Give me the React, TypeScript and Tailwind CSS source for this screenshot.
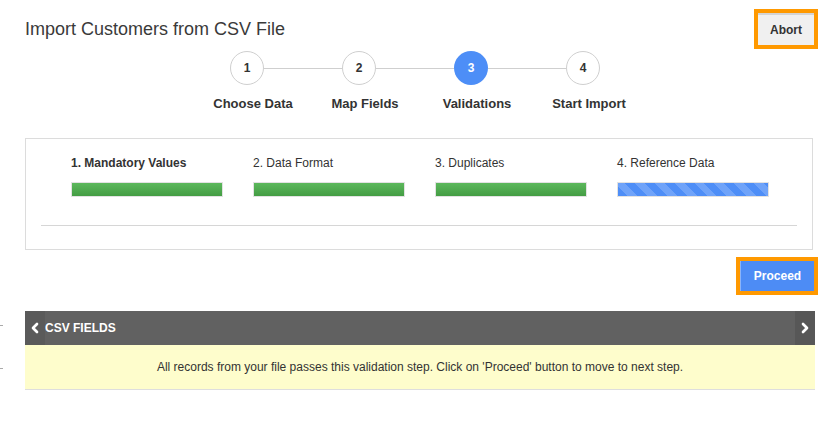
import { ChevronLeft, ChevronRight } from "lucide-react";

const steps = [
  { n: 1, label: "Choose Data" },
  { n: 2, label: "Map Fields" },
  { n: 3, label: "Validations", active: true },
  { n: 4, label: "Start Import" },
];

const checks = [
  { label: "1. Mandatory Values", bold: true, done: true },
  { label: "2. Data Format", done: true },
  { label: "3. Duplicates", done: true },
  { label: "4. Reference Data", done: false },
];

export default function App() {
  return (
    <div className="relative h-[433px] w-[830px] overflow-hidden bg-white font-['Liberation_Sans',Arial,sans-serif] text-[#333]">
      {/* header */}
      <div className="flex items-start justify-between pl-[25px] pr-[12px] pt-[9px]">
        <h1 className="mt-[8px] text-[18px] leading-[24px] text-[#3a3a3a]">Import Customers from CSV File</h1>
        <div className="border-4 border-[#ff9900]">
          <button className="h-[32px] w-[56px] border-t-2 border-[#d4d4d4] bg-[#f0f0f0] text-[12px] font-bold text-[#333]">
            Abort
          </button>
        </div>
      </div>

      {/* stepper */}
      <div className="ml-[197px] mt-[2px] flex">
        {steps.map((s, i) => (
          <div key={s.n} className="relative flex w-[112px] flex-col items-center">
            {i < steps.length - 1 && (
              <div className="absolute left-[67px] top-[17px] h-px w-[78px] bg-[#cfcfcf]" />
            )}
            <div
              className={
                "relative z-10 -ml-[12px] flex h-[34px] w-[34px] items-center justify-center rounded-full text-[12px] font-bold " +
                (s.active
                  ? "bg-[#4d8ef7] text-white"
                  : "border border-[#cfcfcf] bg-white text-[#333]")
              }
            >
              {s.n}
            </div>
            <div className="mt-[11px] whitespace-nowrap text-[13px] font-bold leading-[16px]">{s.label}</div>
          </div>
        ))}
      </div>

      {/* validation panel */}
      <div className="ml-[25px] mt-[26px] h-[112px] w-[788px] border border-[#dcdcdc] px-[15px] pt-[17px]">
        <div className="flex gap-[30px] pl-[30px]">
          {checks.map((c) => (
            <div key={c.label} className="w-[152px]">
              <div className={"text-[12px] leading-[14px] " + (c.bold ? "font-bold" : "")}>{c.label}</div>
              <div className="mt-[12px] h-[15px] border border-[#e2e2e2] bg-white">
                {c.done ? (
                  <div className="h-full bg-gradient-to-b from-[#5cb85c] to-[#449d44]" />
                ) : (
                  <div className="h-full bg-[repeating-linear-gradient(45deg,#4e8ef7_0px,#4e8ef7_7px,#6fa3f9_7px,#6fa3f9_14px)]" />
                )}
              </div>
            </div>
          ))}
        </div>
        <div className="mt-[28px] h-px bg-[#d6d6d6]" />
      </div>

      {/* proceed */}
      <div className="flex justify-end pr-[12px] pt-[7px]">
        <div className="border-4 border-[#ff9900]">
          <button className="h-[30px] w-[74px] border-l border-[#8ab4fa] bg-[#4d8cf5] text-[12px] font-bold text-white">
            Proceed
          </button>
        </div>
      </div>

      {/* csv fields */}
      <div className="ml-[25px] mt-[16px] w-[790px]">
        <div className="flex h-[34px] items-center bg-[#616161] text-white">
          <div className="flex h-full w-[20px] items-center justify-center bg-[#5a5a5a]">
            <ChevronLeft size={16} strokeWidth={4} />
          </div>
          <div className="flex-1 text-[12px] font-bold">CSV FIELDS</div>
          <div className="flex h-full w-[20px] items-center justify-center bg-[#575757]">
            <ChevronRight size={16} strokeWidth={4} />
          </div>
        </div>
        <div className="flex h-[45px] items-center justify-center border-b border-[#dedede] bg-[#fefdcc] text-[12px] text-[#333]">
          All records from your file passes this validation step. Click on 'Proceed' button to move to next step.
        </div>
      </div>

      {/* left edge marks */}
      <div className="absolute left-0 top-[325px] h-px w-[3px] bg-[#aaa]" />
      <div className="absolute left-0 top-[368px] h-px w-[3px] bg-[#aaa]" />
    </div>
  );
}
